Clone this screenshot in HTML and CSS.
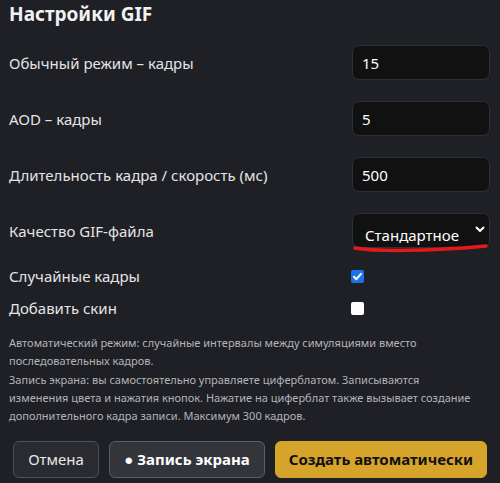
FILE: index.html
```html
<!DOCTYPE html>
<html lang="ru">
<head>
<meta charset="utf-8">
<link rel="stylesheet" href="styles.css">
</head>
<body>
<div class="panel">
  <h2 class="title">Настройки GIF</h2>
  <div class="row">
    <label class="label">Обычный режим – кадры</label>
    <div class="field">15</div>
  </div>
  <div class="row">
    <label class="label">AOD – кадры</label>
    <div class="field">5</div>
  </div>
  <div class="row">
    <label class="label">Длительность кадра / скорость (мс)</label>
    <div class="field">500</div>
  </div>
  <div class="row">
    <label class="label">Качество GIF-файла</label>
    <div class="field select">
      <span class="select-text">Стандартное</span>
      <svg class="chev" width="10" height="7" viewBox="0 0 10 7"><path d="M1.5 1.5 L5 5 L8.5 1.5" fill="none" stroke="#fff" stroke-width="2" stroke-linecap="round" stroke-linejoin="round"/></svg>
      <svg class="mark" width="140" height="10" viewBox="0 0 140 10"><path d="M2 5 C 20 8, 40 8, 70 7 S 120 4, 133 3" fill="none" stroke="#e5191c" stroke-width="3.5" stroke-linecap="round"/></svg>
    </div>
  </div>
  <div class="crow">
    <label class="label">Случайные кадры</label>
    <span class="cb checked"><svg width="13" height="13" viewBox="0 0 13 13"><path d="M3 6.8 L5.4 9.2 L10 3.8" fill="none" stroke="#fff" stroke-width="2" stroke-linecap="round" stroke-linejoin="round"/></svg></span>
  </div>
  <div class="crow">
    <label class="label">Добавить скин</label>
    <span class="cb"></span>
  </div>
  <div class="help">
    <div>Автоматический режим: случайные интервалы между симуляциями вместо</div>
    <div>последовательных кадров.</div>
    <div>Запись экрана: вы самостоятельно управляете циферблатом. Записываются</div>
    <div>изменения цвета и нажатия кнопок. Нажатие на циферблат также вызывает создание</div>
    <div>дополнительного кадра записи. Максимум 300 кадров.</div>
  </div>
  <div class="actions">
    <button class="btn cancel">Отмена</button>
    <button class="btn record">● Запись экрана</button>
    <button class="btn create">Создать автоматически</button>
  </div>
</div>
</body>
</html>
```
FILE: styles.css
```css
html, body {
  margin: 0;
  padding: 0;
  background: #1f2025;
}
body {
  font-family: "Noto Sans", "Open Sans", sans-serif;
  color: #e6e6e6;
  width: 500px;
  height: 483px;
  overflow: hidden;
}
.panel {
  padding: 0 10px 0 9px;
}
.title {
  margin: 0 0 17px;
  font-size: 19px;
  line-height: 28px;
  font-weight: 700;
  color: #f2f2f2;
}
.row {
  display: flex;
  justify-content: space-between;
  align-items: center;
  height: 35px;
  margin-bottom: 21px;
}
.label {
  font-size: 15px;
  color: #e4e4e4;
}
.field {
  box-sizing: border-box;
  width: 138px;
  height: 35px;
  background: #111111;
  border: 1px solid #2f3034;
  border-radius: 7px;
  padding: 0 9px;
  display: flex;
  align-items: center;
  font-size: 15px;
  color: #ffffff;
}
.select {
  position: relative;
  padding: 0 0 0 12px;
  justify-content: space-between;
}
.select-text {
  padding-top: 8px;
}
.chev {
  margin-right: 4px;
  margin-top: -2px;
}
.mark {
  position: absolute;
  left: 0;
  top: 29px;
}
.row:nth-of-type(4) {
  margin-bottom: 18px;
}
.crow {
  display: flex;
  justify-content: space-between;
  align-items: center;
  height: 20px;
  margin-bottom: 12px;
}
.cb {
  box-sizing: border-box;
  width: 13px;
  height: 13px;
  margin-right: 126px;
  border-radius: 2px;
  background: #ffffff;
  display: flex;
}
.cb.checked {
  background: #1a73e8;
}
.help {
  margin: 16px 0 0;
  font-size: 11px;
  line-height: 18.3px;
  color: #b4b4b6;
  white-space: nowrap;
}
.actions {
  display: flex;
  gap: 10px;
  margin-top: 15.5px;
  padding-left: 4px;
}
.btn {
  box-sizing: border-box;
  height: 37px;
  border-radius: 6px;
  font-family: inherit;
  font-size: 15px;
  padding: 0;
}
.cancel {
  width: 86px;
  background: #2a2b30;
  border: 1px solid #505156;
  color: #e8e8e8;
}
.record {
  width: 156px;
  background: #34353b;
  border: 1px solid #5e5f64;
  color: #ffffff;
  font-weight: 700;
}
.create {
  width: 212px;
  background: #d6a42b;
  border: 1px solid #d6a42b;
  color: #111111;
  font-weight: 700;
}
```
